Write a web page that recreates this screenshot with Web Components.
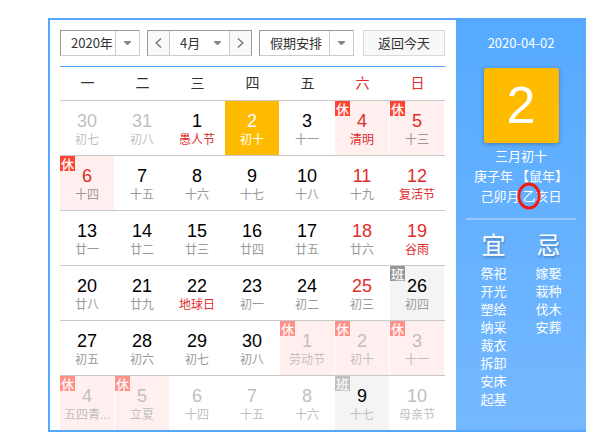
<!DOCTYPE html>
<html lang="zh-CN">
<head>
<meta charset="utf-8">
<meta name="viewport" content="width=device-width, initial-scale=1">
<title>万年历</title>
<style>
  body {
    margin: 0;
    padding: 18px 30px 10px 48px;
    background: #fff;
    font-family: "Liberation Sans", "Noto Sans CJK SC", sans-serif;
    font-size: 13px;
    color: #333;
    --blue: #55a8ff;
    --red: #e02d2d;
    --amber: #ffbb00;
    --cjk: "Noto Sans CJK SC", sans-serif;
  }
</style>
</head>
<body>
<almanac-box>
  <tool-bar slot="main">
    <drop-select label="年份" value="2020年"></drop-select>
    <month-stepper value="4月"></month-stepper>
    <drop-select class="wide" label="假期" value="假期安排"></drop-select>
    <today-button>返回今天</today-button>
  </tool-bar>
  <month-grid slot="main"></month-grid>
  <day-panel slot="side" date="2020-04-02" day="2">
    <luck-list title="宜" items="祭祀 开光 塑绘 纳采 裁衣 拆卸 安床 起基"></luck-list>
    <luck-list title="忌" items="嫁娶 栽种 伐木 安葬"></luck-list>
  </day-panel>
</almanac-box>

<script>
const arrow = `<svg width="7" height="4" viewBox="0 0 7 4" aria-hidden="true"><path d="M0 0h7v1L4 4H3L0 1z" fill="#888"/></svg>`;

function makeRoot(el, html) {
  const template = document.createElement("template");
  template.innerHTML = html;
  el.attachShadow({ mode: "open" });
  el.shadowRoot.appendChild(template.content.cloneNode(true));
  return el.shadowRoot;
}

class AlmanacBox extends HTMLElement {
  constructor() {
    super();
    makeRoot(this, `
      <style>
        :host {
          display: flex;
          border: 2px solid var(--blue);
          border-right: 0;
        }
        main {
          flex: 1;
          min-width: 0;
          padding: 10px 11px 0 10px;
        }
      </style>
      <main><slot name="main"></slot></main>
      <slot name="side"></slot>
    `);
  }
}

class ToolBar extends HTMLElement {
  constructor() {
    super();
    makeRoot(this, `
      <style>
        :host {
          display: flex;
          gap: 7px;
          padding-bottom: 10px;
          border-bottom: 1px solid var(--blue);
          font-family: var(--cjk);
        }
        ::slotted(today-button) { margin-left: auto; }
      </style>
      <slot></slot>
    `);
  }
}

class DropSelect extends HTMLElement {
  constructor() {
    super();
    const root = makeRoot(this, `
      <style>
        :host {
          display: grid;
          grid-template-columns: 1fr 24px;
          box-sizing: border-box;
          width: 80px;
          height: 26px;
          border: 1px solid #999;
          border-right-color: #ccc;
          border-bottom-color: #ccc;
          background: #fff;
        }
        :host(.wide) { width: 95px; }
        :host(.bare) {
          width: 59px;
          height: 24px;
          border: 0;
        }
        select {
          grid-area: 1 / 1 / 2 / 3;
          appearance: none;
          margin: 0;
          padding: 0 0 2px 10px;
          border: 0;
          background: none;
          font: inherit;
          color: #333;
        }
        span {
          grid-area: 1 / 2;
          display: grid;
          place-items: center;
          border-left: 1px solid #ccc;
          pointer-events: none;
        }
        :host(.bare) span { border-left: 0; }
      </style>
      <select><option></option></select>
      <span>${arrow}</span>
    `);
    root.querySelector("select").setAttribute("aria-label", this.getAttribute("label"));
    root.querySelector("option").textContent = this.getAttribute("value");
  }
}

class MonthStepper extends HTMLElement {
  constructor() {
    super();
    makeRoot(this, `
      <style>
        :host {
          display: flex;
          box-sizing: border-box;
          height: 26px;
          border: 1px solid #999;
          border-bottom-color: #ccc;
        }
        button {
          box-sizing: border-box;
          width: 22px;
          margin: 0;
          padding: 0;
          border: 0;
          background: #f9f9f9;
          display: grid;
          place-items: center;
          cursor: pointer;
        }
        button:first-of-type { border-right: 1px solid #ccc; }
        button:last-of-type { border-left: 1px solid #ccc; }
        path { fill: none; stroke: #777; stroke-width: 1.4; }
      </style>
      <button type="button" aria-label="上个月"><svg width="7" height="10" viewBox="0 0 7 10"><path d="M6 .5 1.2 5 6 9.5"/></svg></button>
      <drop-select class="bare" label="月份" value="${this.getAttribute("value")}"></drop-select>
      <button type="button" aria-label="下个月"><svg width="7" height="10" viewBox="0 0 7 10"><path d="M1 .5 5.8 5 1 9.5"/></svg></button>
    `);
  }
}

class TodayButton extends HTMLElement {
  constructor() {
    super();
    makeRoot(this, `
      <style>
        :host { display: block; }
        button {
          height: 26px;
          padding: 0 14px;
          border: 1px solid #d9d9d9;
          background: #f8f8f8;
          font: inherit;
          line-height: 24px;
          color: #333;
          cursor: pointer;
        }
      </style>
      <button type="button"><slot></slot></button>
    `);
  }
}

class DayCell extends HTMLElement {
  constructor() {
    super();
    const root = makeRoot(this, `
      <style>
        :host {
          display: block;
          position: relative;
          box-sizing: border-box;
          height: 54px;
          margin-right: 1px;
          padding-top: 10px;
          text-align: center;
          color: #000;
        }
        b {
          display: block;
          font-weight: 400;
          font-size: 18px;
          line-height: 20px;
        }
        small {
          display: block;
          font-size: 12px;
          line-height: 18px;
          color: #999;
          white-space: nowrap;
        }
        i {
          position: absolute;
          left: 0;
          top: 0;
          width: 15px;
          height: 15px;
          font: 500 13px/15px var(--cjk);
          color: #fff;
          background: #ff4433;
        }
        i:empty { display: none; }
        :host(.weekend) b, :host(.festival) small { color: var(--red); }
        :host(.rest) { background: #ffefef; }
        :host(.work) { background: #f4f4f4; }
        :host(.work) i { background: #969696; }
        :host(.other) b, :host(.other) small, :host(.faded) small { color: #bfbfbf; }
        :host(.other) i, :host(.faded) i { opacity: .55; }
        :host(.today) { background: var(--amber); }
        :host(.today) b, :host(.today) small { color: #fff; }
      </style>
      <i></i><b></b><small></small>
    `);
    const kind = this.className;
    root.querySelector("b").textContent = this.getAttribute("day");
    root.querySelector("small").textContent = this.getAttribute("lunar");
    if (kind.includes("rest")) root.querySelector("i").textContent = "休";
    if (kind.includes("work")) root.querySelector("i").textContent = "班";
  }
}

// day, lunar text, classes
const weeks = [
  [[30, "初七", "other"], [31, "初八", "other"], [1, "愚人节", "festival"], [2, "初十", "today"], [3, "十一"], [4, "清明", "weekend rest festival"], [5, "十三", "weekend rest"]],
  [[6, "十四", "weekend rest"], [7, "十五"], [8, "十六"], [9, "十七"], [10, "十八"], [11, "十九", "weekend"], [12, "复活节", "weekend festival"]],
  [[13, "廿一"], [14, "廿二"], [15, "廿三"], [16, "廿四"], [17, "廿五"], [18, "廿六", "weekend"], [19, "谷雨", "weekend festival"]],
  [[20, "廿八"], [21, "廿九"], [22, "地球日", "festival"], [23, "初一"], [24, "初二"], [25, "初三", "weekend"], [26, "初四", "work"]],
  [[27, "初五"], [28, "初六"], [29, "初七"], [30, "初八"], [1, "劳动节", "other rest"], [2, "初十", "other rest"], [3, "十一", "other rest"]],
  [[4, "五四青...", "other rest"], [5, "立夏", "other rest"], [6, "十四", "other"], [7, "十五", "other"], [8, "十六", "other"], [9, "十七", "work faded"], [10, "母亲节", "other"]]
];

class MonthGrid extends HTMLElement {
  constructor() {
    super();
    const head = [..."一二三四五六日"].map((d) => `<th scope="col">${d}</th>`).join("");
    const rows = weeks.map((week) => `<tr>${week.map(([day, lunar, kind = ""]) =>
      `<td><day-cell class="${kind}" day="${day}" lunar="${lunar}"></day-cell></td>`).join("")}</tr>`).join("");
    makeRoot(this, `
      <style>
        :host { display: block; }
        table {
          width: 100%;
          table-layout: fixed;
          border-spacing: 0;
        }
        th {
          padding: 5px 0 8px;
          font: 400 14px/20px var(--cjk);
        }
        th:nth-child(n + 6) { color: var(--red); }
        td {
          padding: 0;
          border-top: 1px solid #c8c8c8;
        }
      </style>
      <table>
        <thead><tr>${head}</tr></thead>
        <tbody>${rows}</tbody>
      </table>
    `);
  }
}

class DayPanel extends HTMLElement {
  constructor() {
    super();
    makeRoot(this, `
      <style>
        :host {
          display: block;
          box-sizing: border-box;
          width: 130px;
          padding: 13px 10px 0;
          background: linear-gradient(#55aaff, #75b8ff);
          font-family: var(--cjk);
          line-height: 20px;
          text-align: center;
          color: #fff;
        }
        p { margin: 0; white-space: nowrap; }
        .day {
          width: 75px;
          margin: 15px auto 3px;
          border-radius: 3px;
          background: var(--amber);
          box-shadow: 0 1px 4px rgba(0, 0, 0, .3);
          font: 52px/75px "Liberation Sans", sans-serif;
        }
        .marked {
          position: relative;
          display: inline-block;
        }
        .marked svg {
          position: absolute;
          left: 50%;
          top: 50%;
          transform: translate(-50%, -50%);
        }
        .luck {
          display: grid;
          grid-template-columns: 1fr 1fr;
          margin-top: 12px;
          padding-top: 8px;
          border-top: 2px solid #94c8ff;
        }
      </style>
      <p>${this.getAttribute("date")}</p>
      <p class="day">${this.getAttribute("day")}</p>
      <p>三月初十</p>
      <p>庚子年 【鼠年】</p>
      <p>己卯月 <span class="marked">乙<svg width="24" height="28" viewBox="0 0 24 28" aria-hidden="true"><ellipse cx="12" cy="14" rx="10.2" ry="12" fill="none" stroke="#f5190f" stroke-width="2.8"/></svg></span>亥日</p>
      <div class="luck"><slot></slot></div>
    `);
  }
}

class LuckList extends HTMLElement {
  constructor() {
    super();
    const items = this.getAttribute("items").split(" ");
    makeRoot(this, `
      <style>
        :host { display: block; }
        h3 {
          margin: 0 0 4px;
          font-size: 24px;
          font-weight: 400;
          line-height: 32px;
          text-shadow: 1px 2px 2px rgba(0, 0, 0, .25);
        }
        ul {
          margin: 0;
          padding: 0;
          list-style: none;
          line-height: 18px;
        }
      </style>
      <h3>${this.getAttribute("title")}</h3>
      <ul>${items.map((item) => `<li>${item}</li>`).join("")}</ul>
    `);
  }
}

window.customElements.define("drop-select", DropSelect);
window.customElements.define("month-stepper", MonthStepper);
window.customElements.define("today-button", TodayButton);
window.customElements.define("tool-bar", ToolBar);
window.customElements.define("day-cell", DayCell);
window.customElements.define("month-grid", MonthGrid);
window.customElements.define("luck-list", LuckList);
window.customElements.define("day-panel", DayPanel);
window.customElements.define("almanac-box", AlmanacBox);
</script>
</body>
</html>
